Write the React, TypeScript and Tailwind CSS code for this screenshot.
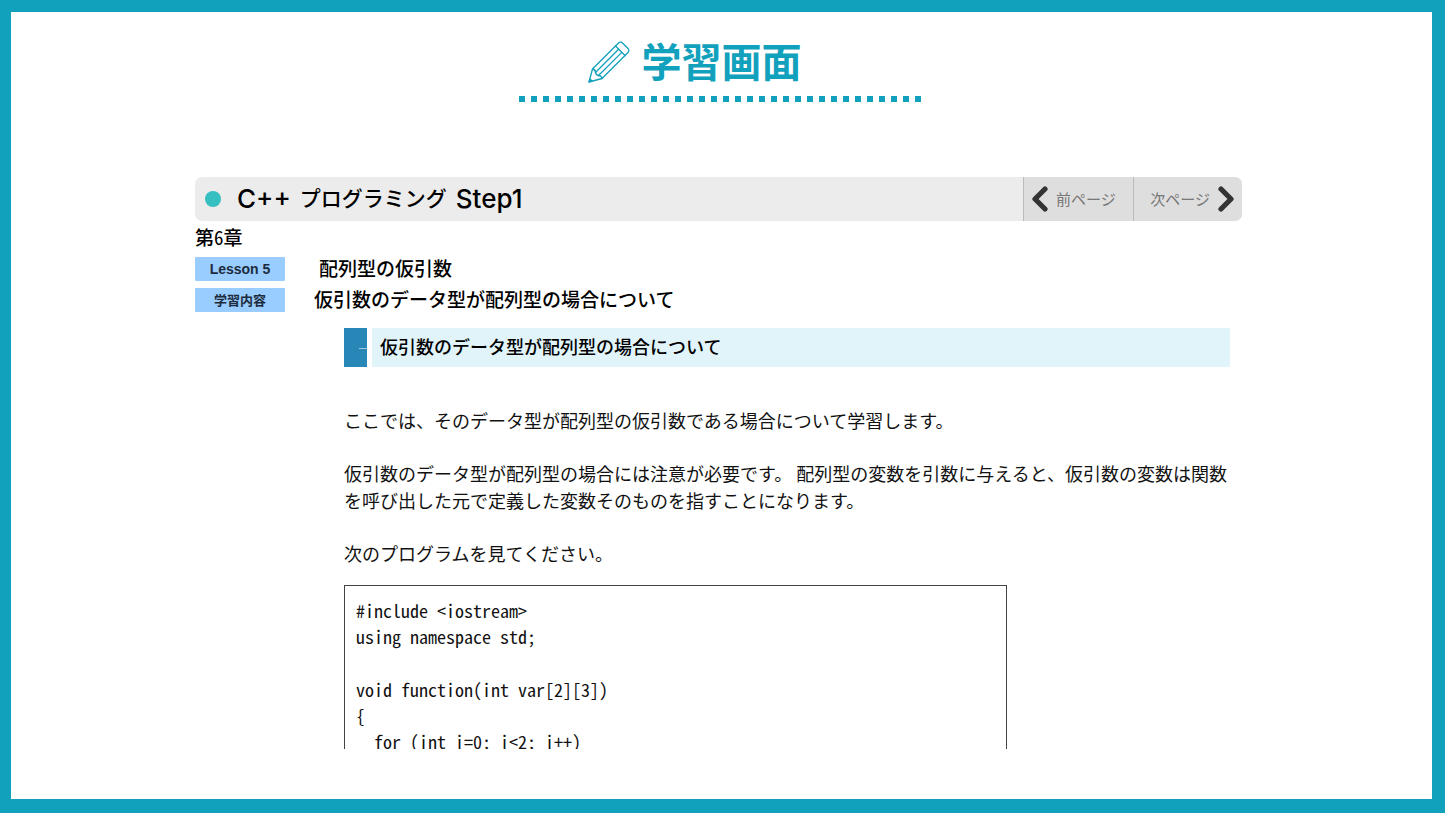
import type { ReactNode } from 'react'

const LESSON_TITLE = '仮引数のデータ型が配列型の場合について'

const codeBlocks = [
  ['#include <iostream>', 'using namespace std;'],
  ['void function(int var[2][3])', '{', '  for (int i=0; i<2; i++)']
]

const PencilIcon = () => (
  <svg
    viewBox="0 0 42 42"
    className="h-[42px] w-[42px]"
    fill="none"
    stroke="currentColor"
    strokeWidth="1.3"
    strokeLinejoin="round"
    strokeLinecap="round"
    aria-hidden="true"
  >
    <path d="M1 41 L4.5 28 L30.3 2.2 Q32.5 0 34.7 2.2 L39.8 7.3 Q42 9.5 39.8 11.7 L14 37.5 Z" />
    <path d="M4.5 28 Q7.5 28.5 7.5 31.5 Q8.5 34.5 10.5 34.5 Q13.5 34.5 14 37.5" />
    <path d="M27.5 5 L37 14.5" />
    <path d="M7.5 31.5 L30.6 8.2 M10.5 34.5 L33.8 11.4" />
    <path d="M2 38 L4 40 L1 41 Z" fill="currentColor" />
  </svg>
)

const Chevron = ({ d }: { d: string }) => (
  <svg
    viewBox="0 0 16 26"
    className="h-[26px] w-4 shrink-0"
    fill="none"
    stroke="#333333"
    strokeWidth="5.2"
    strokeLinecap="round"
    strokeLinejoin="round"
    aria-hidden="true"
  >
    <path d={d} />
  </svg>
)

const LessonRow = ({ label, children }: { label: ReactNode; children: ReactNode }) => (
  <div className="flex h-6 items-center leading-[22px]">
    <dt className="flex h-6 w-[90px] shrink-0 items-center justify-center rounded-[1px] bg-[#99ccff] text-[13px] font-bold text-[#1c2b3c]">
      {label}
    </dt>
    {children}
  </div>
)

export default function App() {
  return (
    <div className="flex h-screen flex-col overflow-hidden border-t-[12px] border-r-[13px] border-b-[14px] border-l-[11px] border-[#11a1bd] bg-white pb-[50px] font-['Noto_Sans_CJK_JP',sans-serif] text-black">
      <header className="mx-auto flex w-[406px] shrink-0 flex-col pt-6 text-[#11a1bd]">
        <div className="flex h-[52px] items-center gap-3 pl-[69px]">
          <PencilIcon />
          <h1 className="pb-1 text-[40px] leading-[48px] font-bold">学習画面</h1>
        </div>
        <div className="mt-2 h-[6px] w-[402px] bg-[repeating-linear-gradient(90deg,#11a1bd_0_6px,transparent_6px_12px)]" />
      </header>

      <main className="mt-[75px] min-h-0 flex-1 overflow-hidden pr-[190px] pl-[184px]">
        <div className="flex h-11 overflow-hidden rounded-[7px] bg-[#ececec]">
          <div className="flex flex-1 items-center pl-[10px]">
            <span className="h-4 w-4 rounded-full bg-[#35bfc0]" />
            <h2 className="ml-4 flex items-center gap-[9px] text-[21px] leading-[40px] font-medium">
              <span className="font-['Inter',sans-serif] text-[26px]">C++</span>
              <span className="pb-1">プログラミング</span>
              <span className="font-['Inter',sans-serif] text-[26px]">Step1</span>
            </h2>
          </div>
          <nav className="flex text-[15px] text-[#777777]">
            <button className="flex w-[110px] items-center gap-2 border-l border-[#bbbbbb] bg-[#dedede] pl-2">
              <Chevron d="M13 3 L3 13 L13 23" />
              前ページ
            </button>
            <button className="flex w-[109px] items-center justify-end gap-2 border-l border-[#bbbbbb] bg-[#dedede] pr-2">
              次ページ
              <Chevron d="M3 3 L13 13 L3 23" />
            </button>
          </nav>
        </div>

        <p className="mt-[3px] text-[19px] leading-[26px] font-medium">
          第<span className="font-['Noto_Sans_Mono_CJK_JP','Noto_Sans_CJK_JP',sans-serif]">6</span>章
        </p>

        <dl className="mt-[7px] flex flex-col gap-[7px] text-[19px] font-medium">
          <LessonRow label={<span className="font-['Liberation_Sans',sans-serif] text-[14px]">Lesson 5</span>}>
            <dd className="pb-[2px] pl-[34px]">配列型の仮引数</dd>
          </LessonRow>
          <LessonRow label="学習内容">
            <dd className="pb-[2px] pl-[29px]">{LESSON_TITLE}</dd>
          </LessonRow>
        </dl>

        <section className="mt-4 mr-3 ml-[149px]">
          <div className="flex h-[39px] gap-[5px]">
            <span className="flex w-[23px] items-center justify-end bg-[#2887b6]">
              <span className="mt-[2px] h-px w-2 bg-[#9cc9e0]" />
            </span>
            <h3 className="flex flex-1 items-center bg-[#e0f4f9] pb-[2px] pl-2 text-[18px] font-medium">
              {LESSON_TITLE}
            </h3>
          </div>

          <div className="mt-10 flex flex-col gap-[26px] text-[18px] leading-[27px] whitespace-nowrap text-[#111111]">
            <p>ここでは、そのデータ型が配列型の仮引数である場合について学習します。</p>
            <p>
              仮引数のデータ型が配列型の場合には注意が必要です。 配列型の変数を引数に与えると、仮引数の変数は関数
              <br />
              を呼び出した元で定義した変数そのものを指すことになります。
            </p>
            <p>次のプログラムを見てください。</p>
          </div>

          <pre className="mt-[18px] mr-[223px] flex flex-col gap-[27px] border border-[#444444] px-[11px] py-[11px] font-['Noto_Sans_Mono_CJK_JP','Liberation_Mono',monospace] text-[18px] leading-[26px] text-[#111111]">
            {codeBlocks.map((lines) => (
              <code key={lines[0]} className="font-['Noto_Sans_Mono_CJK_JP','Liberation_Mono',monospace]">
                {lines.join('\n')}
              </code>
            ))}
          </pre>
        </section>
      </main>
    </div>
  )
}
